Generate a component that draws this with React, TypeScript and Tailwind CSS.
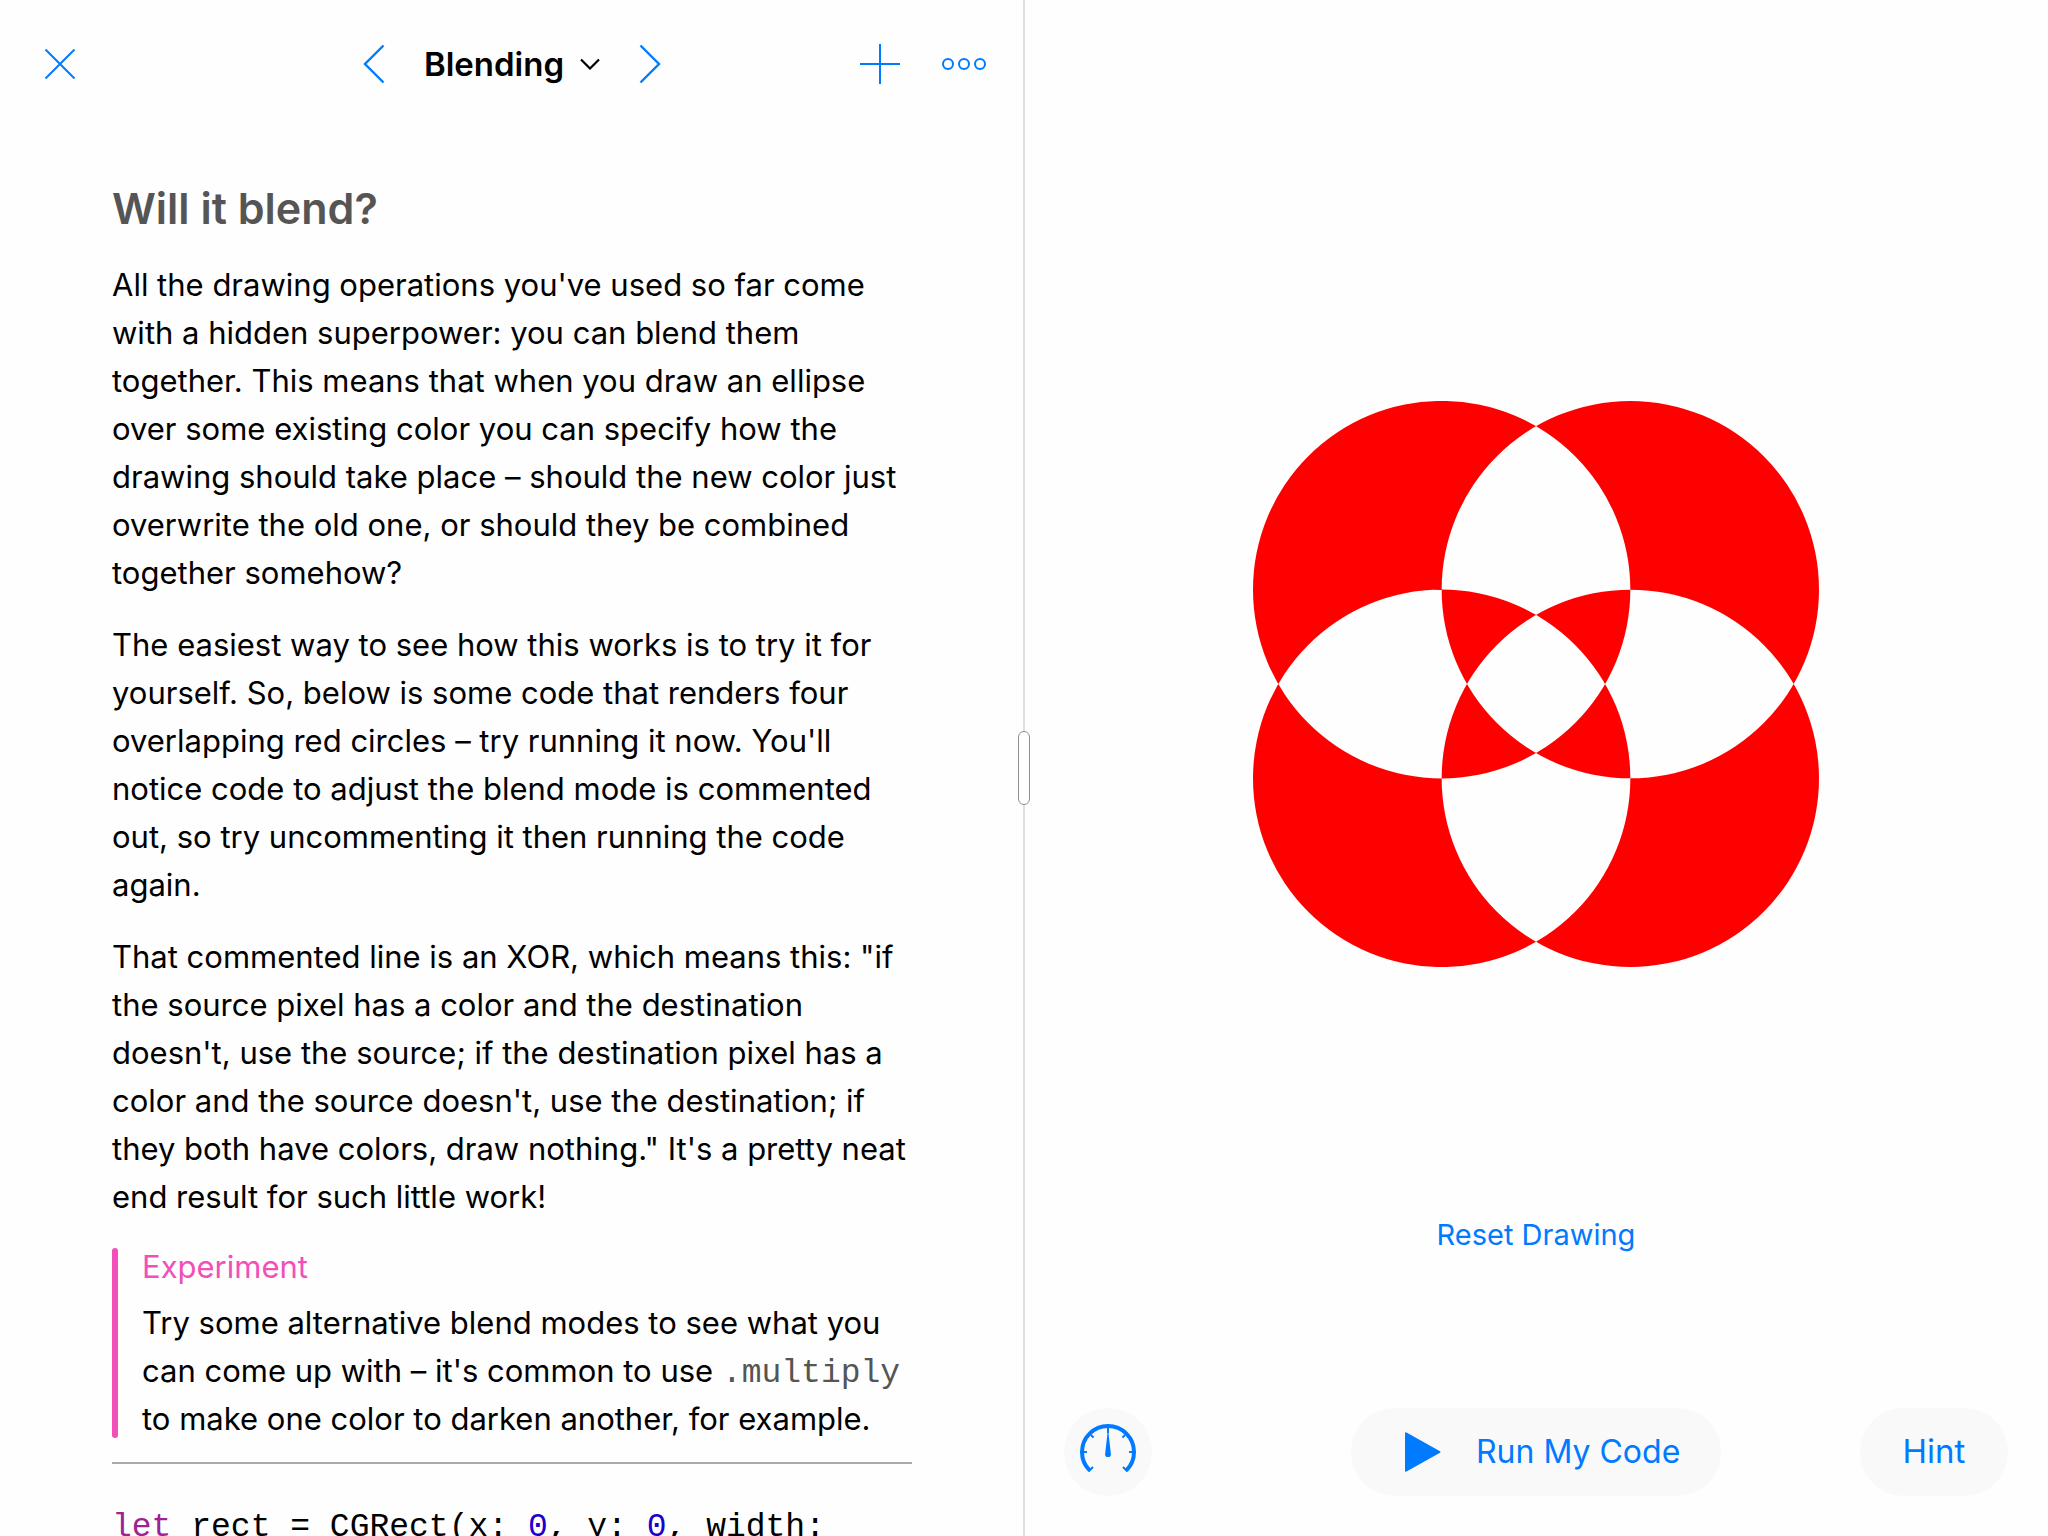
import type { ReactNode } from "react";

function Lines({ lines }: { lines: ReactNode[] }) {
  return (
    <p>
      {lines.map((line, i) => (
        <span key={i} className="block whitespace-nowrap">
          {line}
        </span>
      ))}
    </p>
  );
}

function Header() {
  return (
    <header className="flex h-32 shrink-0 items-center justify-between px-9 text-[#007aff]">
      <div className="flex flex-1">
        <button aria-label="Close">
          <svg width="48" height="32" viewBox="-8 0 48 32" fill="none" stroke="currentColor" strokeWidth="2">
            <path d="M1.5 1.5 30.5 30.5M30.5 1.5 1.5 30.5" />
          </svg>
        </button>
      </div>
      <div className="flex items-center gap-[39px]">
        <button aria-label="Previous page">
          <svg width="22" height="40" viewBox="0 0 22 40" fill="none" stroke="currentColor" strokeWidth="2.4">
            <path d="M20.5 1.5 2 20 20.5 38.5" />
          </svg>
        </button>
        <button className="flex items-center gap-4 text-[33px] leading-10 font-semibold text-black">
          Blending
          <svg width="20" height="12" viewBox="0 0 20 12" fill="none" stroke="currentColor" strokeWidth="2.2">
            <path d="M1 1.5 10 10.5 19 1.5" />
          </svg>
        </button>
        <button aria-label="Next page">
          <svg width="22" height="40" viewBox="0 0 22 40" fill="none" stroke="currentColor" strokeWidth="2.4">
            <path d="M1.5 1.5 20 20 1.5 38.5" />
          </svg>
        </button>
      </div>
      <div className="flex flex-1 items-center justify-end gap-10">
        <button aria-label="Add">
          <svg width="40" height="40" viewBox="0 0 40 40" fill="none" stroke="currentColor" strokeWidth="2">
            <path d="M20 0V40M0 20H40" />
          </svg>
        </button>
        <button aria-label="More">
          <svg width="48" height="14" viewBox="-1 0 48 14" fill="none" stroke="currentColor" strokeWidth="2">
            <circle cx="7" cy="7" r="5" />
            <circle cx="23" cy="7" r="5" />
            <circle cx="39" cy="7" r="5" />
          </svg>
        </button>
      </div>
    </header>
  );
}

function Lesson() {
  return (
    <article className="px-28 pt-12 text-[31px] leading-[48px] text-black">
      <h1 className="mb-[21px] text-[43px] leading-[64px] font-semibold text-[#555]">Will it blend?</h1>
      <div className="flex flex-col gap-6">
        <Lines
          lines={[
            "All the drawing operations you've used so far come",
            "with a hidden superpower: you can blend them",
            "together. This means that when you draw an ellipse",
            "over some existing color you can specify how the",
            "drawing should take place – should the new color just",
            "overwrite the old one, or should they be combined",
            "together somehow?",
          ]}
        />
        <Lines
          lines={[
            "The easiest way to see how this works is to try it for",
            "yourself. So, below is some code that renders four",
            "overlapping red circles – try running it now. You'll",
            "notice code to adjust the blend mode is commented",
            "out, so try uncommenting it then running the code",
            "again.",
          ]}
        />
        <Lines
          lines={[
            "That commented line is an XOR, which means this: \"if",
            "the source pixel has a color and the destination",
            "doesn't, use the source; if the destination pixel has a",
            "color and the source doesn't, use the destination; if",
            "they both have colors, draw nothing.\" It's a pretty neat",
            "end result for such little work!",
          ]}
        />
      </div>
      <aside className="mt-[27px] flex gap-6">
        <div className="w-[6px] shrink-0 rounded-full bg-[#f24fb8]" />
        <div className="h-[190px]">
          <h2 className="mb-[13px] leading-[38px] text-[#f24fb8]">Experiment</h2>
          <Lines
            lines={[
              "Try some alternative blend modes to see what you",
              <>
                can come up with – it's common to use{" "}
                <code className="font-['Liberation_Mono',monospace] text-[33px] leading-none text-[#555]">
                  .multiply
                </code>
              </>,
              "to make one color to darken another, for example.",
            ]}
          />
        </div>
      </aside>
      <hr className="mt-6 border-t-2 border-[#aaa]" />
      <pre className="mt-10 font-['Liberation_Mono',monospace] text-[33px] leading-[48px]">
        <span className="text-[#9b2393]">let</span> rect = CGRect(x: <span className="text-[#1c00cf]">0</span>, y:{" "}
        <span className="text-[#1c00cf]">0</span>, width:
      </pre>
    </article>
  );
}

function XorCircles() {
  const r = 189;
  const ring = (cx: number, cy: number) =>
    `M${cx - r} ${cy}a${r} ${r} 0 1 0 ${2 * r} 0a${r} ${r} 0 1 0 ${-2 * r} 0Z`;
  const d = [ring(189, 189), ring(378, 189), ring(189, 378), ring(378, 378)].join("");
  return (
    <svg width="566" height="566" viewBox="0 0 567 567" role="img" aria-label="Four overlapping red circles">
      <path d={d} fill="#ff0000" fillRule="evenodd" />
    </svg>
  );
}

function Gauge() {
  return (
    <svg width="88" height="88" viewBox="0 0 88 88" fill="none" stroke="#007aff">
      <path d="M25.6 62.4A26 26 0 1 1 62.4 62.4" strokeWidth="4" />
      <path
        d="M44 20v5M18 44h5M65 44h5M27 27l2.6 2.6M61 27l-2.6 2.6M24.5 63.5l4.5-4.5M63.5 63.5l-4.5-4.5"
        strokeWidth="2"
      />
      <path d="M43.6 24h.8L46.9 46.2a2.9 2.9 0 1 1-5.8 0Z" fill="#007aff" stroke="none" />
    </svg>
  );
}

function LiveView() {
  return (
    <section className="flex flex-1 basis-0 flex-col items-center pt-[157px] text-[#007aff]">
      <div className="flex flex-1 items-center">
        <XorCircles />
      </div>
      <button className="text-[29px] leading-[48px]">Reset Drawing</button>
      <footer className="mt-[149px] mb-10 flex w-full items-center justify-between px-10">
        <div className="flex flex-1">
          <button aria-label="Execution speed" className="rounded-full bg-[#f9f9f9]">
            <Gauge />
          </button>
        </div>
        <button className="flex h-[88px] w-[370px] items-center gap-[35px] rounded-full bg-[#f9f9f9] pl-[54px] text-[32px]">
          <svg width="36" height="40" viewBox="0 0 36 40" fill="currentColor">
            <path d="M0 1.2Q0-.4 1.5.4L35 19.2Q36 20 35 20.8L1.5 39.6Q0 40.4 0 38.8Z" />
          </svg>
          Run My Code
        </button>
        <div className="flex flex-1 justify-end">
          <button className="h-[88px] w-[148px] rounded-full bg-[#f9f9f9] text-[33px]">Hint</button>
        </div>
      </footer>
    </section>
  );
}

export default function App() {
  return (
    <main className="flex h-screen overflow-hidden bg-[#fefefe] font-[Inter,sans-serif]">
      <section className="flex flex-1 basis-0 flex-col overflow-hidden">
        <Header />
        <Lesson />
      </section>
      <div className="relative -mx-px w-[2px] shrink-0 bg-[#e0e0e0]">
        <div
          role="separator"
          aria-orientation="vertical"
          className="absolute top-1/2 left-1/2 h-[74px] w-3 -translate-1/2 rounded-full border border-[#8e8e8e] bg-white"
        />
      </div>
      <LiveView />
    </main>
  );
}
